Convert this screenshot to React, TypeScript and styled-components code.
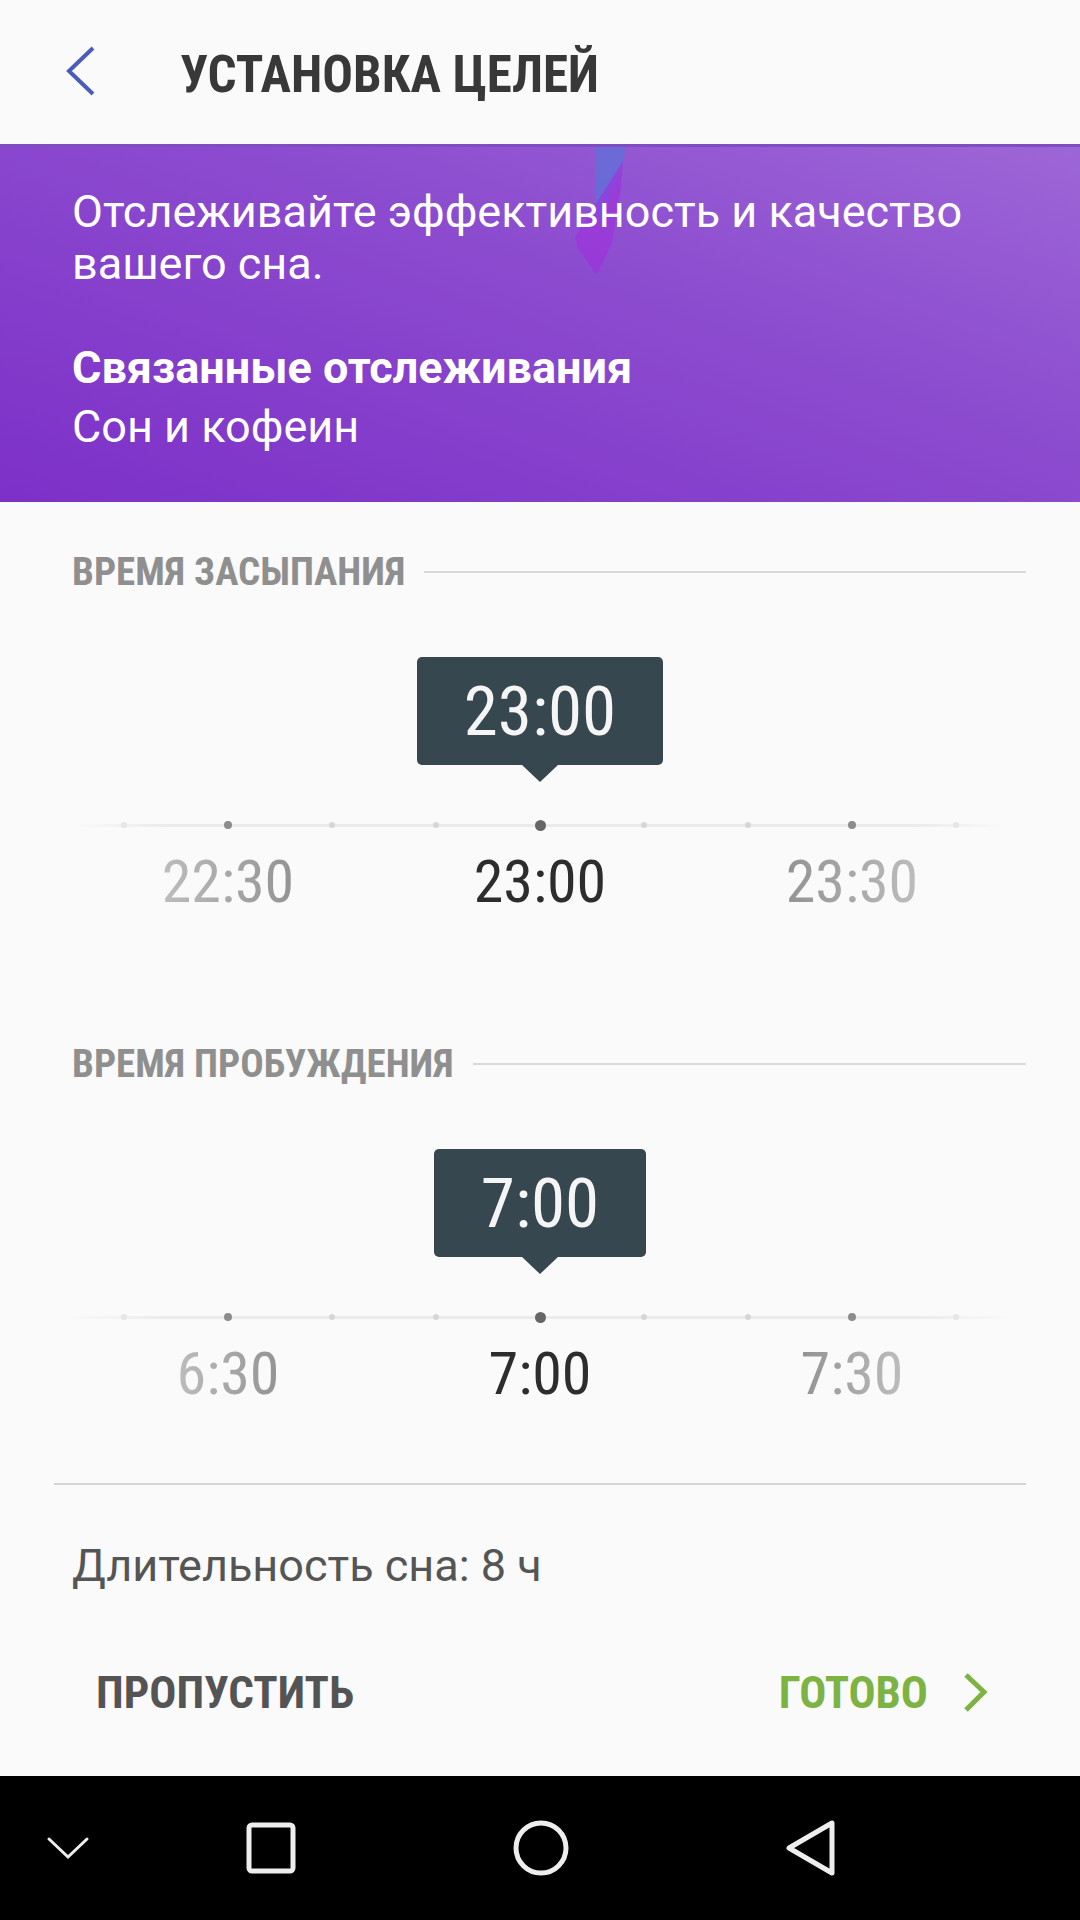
import styled, { createGlobalStyle } from 'styled-components';

const COND = `'Roboto Condensed', 'Liberation Sans Narrow', 'DejaVu Sans Condensed', Roboto, sans-serif`;

const GlobalStyle = createGlobalStyle`
  html, body {
    margin: 0;
    padding: 0;
    background: #fafafa;
  }
  body {
    font-family: Roboto, 'Noto Sans', sans-serif;
  }
`;

type TickKind = 'faint' | 'minor' | 'major' | 'center';
const ticks: TickKind[] = ['faint', 'major', 'minor', 'minor', 'center', 'minor', 'minor', 'major', 'faint'];

type PickerProps = { title: string; value: string; prev: string; next: string };

const TimePicker = ({ title, value, prev, next }: PickerProps) => (
  <Section>
    <SectionHead>
      <SectionTitle>{title}</SectionTitle>
      <Rule />
    </SectionHead>
    <Bubble>
      <BubbleBox>{value}</BubbleBox>
      <BubbleTip />
    </Bubble>
    <Ticks>
      {ticks.map((t, i) => (
        <Tick key={i} $kind={t} />
      ))}
    </Ticks>
    <Labels>
      <TimeLabel $tone='left'>{prev}</TimeLabel>
      <TimeLabel $tone='active'>{value}</TimeLabel>
      <TimeLabel $tone='right'>{next}</TimeLabel>
    </Labels>
  </Section>
);

const App = () => {
  return (
    <Screen>
      <GlobalStyle />
      <Header>
        <BackButton>
          <svg width='32' height='52' viewBox='0 0 32 52'>
            <path d='M27 2 L3 25 L27 48' fill='none' stroke='#4a5bb9' strokeWidth='4' />
          </svg>
        </BackButton>
        <Title>УСТАНОВКА ЦЕЛЕЙ</Title>
      </Header>

      <Banner>
        <Streak width='70' height='140' viewBox='0 0 70 140'>
          <path d='M25 0 L56 0 L52 20 L30 75 L26 70 Z' fill='#5d72d8' opacity='0.75' />
          <path d='M53 14 L51 40 L42 96 L27 128 L8 102 L5 90 Z' fill='#a02fdc' opacity='0.6' />
        </Streak>
        <Intro>Отслеживайте эффективность и качество вашего сна.</Intro>
        <Related>
          <strong>Связанные отслеживания</strong>
          <span>Сон и кофеин</span>
        </Related>
      </Banner>

      <Sections>
        <TimePicker title='ВРЕМЯ ЗАСЫПАНИЯ' value='23:00' prev='22:30' next='23:30' />
        <TimePicker title='ВРЕМЯ ПРОБУЖДЕНИЯ' value='7:00' prev='6:30' next='7:30' />
      </Sections>

      <Divider />
      <Duration>Длительность сна: 8 ч</Duration>

      <Actions>
        <SkipButton>ПРОПУСТИТЬ</SkipButton>
        <DoneButton>
          ГОТОВО
          <svg width='26' height='42' viewBox='0 0 26 42'>
            <path d='M4 3 L22 20 L4 38' fill='none' stroke='#7cb342' strokeWidth='5' />
          </svg>
        </DoneButton>
      </Actions>

      <Spacer />

      <NavBar>
        <NavCell>
          <svg width='44' height='26' viewBox='0 0 44 26'>
            <path d='M3 4 L22 22 L41 4' fill='none' stroke='#eee' strokeWidth='3' strokeLinecap='round' />
          </svg>
        </NavCell>
        <NavCell>
          <svg width='50' height='52' viewBox='0 0 50 52'>
            <rect x='3' y='3' width='44' height='46' rx='3' fill='none' stroke='#eee' strokeWidth='5' />
          </svg>
        </NavCell>
        <NavCell>
          <svg width='58' height='58' viewBox='0 0 58 58'>
            <circle cx='29' cy='29' r='25' fill='none' stroke='#eee' strokeWidth='5' />
          </svg>
        </NavCell>
        <NavCell>
          <svg width='52' height='58' viewBox='0 0 52 58'>
            <path d='M4 29 L47 4 L47 54 Z' fill='none' stroke='#eee' strokeWidth='5' strokeLinejoin='round' />
          </svg>
        </NavCell>
        <div />
      </NavBar>
    </Screen>
  );
};

export default App;

const Screen = styled.div`
  width: 1080px;
  height: 1920px;
  display: flex;
  flex-direction: column;
  background: #fafafa;
  overflow: hidden;
`;

const Header = styled.header`
  height: 144px;
  display: flex;
  align-items: center;
  flex-shrink: 0;
`;

const BackButton = styled.div`
  width: 180px;
  padding-left: 66px;
  box-sizing: border-box;
  display: flex;
  align-items: center;

  svg {
    display: block;
  }
`;

const Title = styled.h1`
  margin: 6px 0 0;
  font-family: ${COND};
  font-weight: 700;
  font-size: 51px;
  line-height: 60px;
  color: #383838;
  white-space: nowrap;
`;

const Banner = styled.section`
  position: relative;
  height: 358px;
  flex-shrink: 0;
  box-sizing: border-box;
  padding: 39px 72px 0;
  color: #fff;
  background: linear-gradient(200deg, #9d66d7 0%, #8c4ccf 40%, #7d30c8 100%);
  border-top: 3px solid #7f4cc2;
`;

const Streak = styled.svg`
  position: absolute;
  left: 570px;
  top: 0;
`;

const Intro = styled.p`
  position: relative;
  margin: 0;
  font-size: 45px;
  line-height: 52px;
`;

const Related = styled.div`
  position: relative;
  margin-top: 48px;
  display: flex;
  flex-direction: column;
  font-size: 45px;
  line-height: 59px;

  strong {
    font-weight: 700;
  }
`;

const Sections = styled.div`
  display: flex;
  flex-direction: column;
  gap: 125px;
  padding-top: 48px;
`;

const Section = styled.section`
  display: flex;
  flex-direction: column;
`;

const SectionHead = styled.div`
  display: flex;
  align-items: center;
  gap: 19px;
  padding: 0 54px 0 72px;
`;

const SectionTitle = styled.h2`
  margin: 0;
  font-family: ${COND};
  font-weight: 700;
  font-size: 39px;
  line-height: 44px;
  color: #8f8f8f;
  white-space: nowrap;
`;

const Rule = styled.div`
  flex: 1;
  height: 2px;
  background: #d9d9d9;
`;

const Bubble = styled.div`
  margin-top: 63px;
  display: flex;
  flex-direction: column;
  align-items: center;
`;

const BubbleBox = styled.div`
  height: 108px;
  padding: 0 47px;
  display: flex;
  align-items: center;
  border-radius: 5px;
  background: #37474f;
  color: #f5f5f5;
  font-family: ${COND};
  font-size: 69px;
`;

const BubbleTip = styled.div`
  width: 0;
  height: 0;
  border-left: 18px solid transparent;
  border-right: 18px solid transparent;
  border-top: 17px solid #37474f;
`;

const tickSizes: Record<TickKind, string> = {
  faint: '6px',
  minor: '6px',
  major: '8px',
  center: '11px',
};

const tickColors: Record<TickKind, string> = {
  faint: '#e6e6e6',
  minor: '#d6d6d6',
  major: '#8c8c8c',
  center: '#666666',
};

const Ticks = styled.div`
  margin: 33px auto 0;
  width: 936px;
  height: 20px;
  display: grid;
  grid-template-columns: repeat(9, 104px);
  align-items: center;
  justify-items: center;
  background: linear-gradient(
      to right,
      rgba(235, 235, 235, 0) 0%,
      #ebebeb 10%,
      #ebebeb 90%,
      rgba(235, 235, 235, 0) 100%
    )
    center / 100% 3px no-repeat;
`;

const Tick = styled.span<{ $kind: TickKind }>`
  width: ${({ $kind }) => tickSizes[$kind]};
  height: ${({ $kind }) => tickSizes[$kind]};
  border-radius: 50%;
  background: ${({ $kind }) => tickColors[$kind]};
`;

const Labels = styled.div`
  margin: 12px auto 0;
  width: 936px;
  display: grid;
  grid-template-columns: repeat(3, 312px);
  justify-items: center;
`;

const TimeLabel = styled.span<{ $tone: 'left' | 'active' | 'right' }>`
  font-family: ${COND};
  font-size: 60px;
  line-height: 70px;
  color: ${({ $tone }) => ($tone === 'active' ? '#2d2d2d' : 'transparent')};
  ${({ $tone }) =>
    $tone === 'active'
      ? ''
      : `
    background: linear-gradient(to ${$tone === 'left' ? 'right' : 'left'}, #bdbdbd, #939393);
    -webkit-background-clip: text;
    background-clip: text;
  `}
`;

const Divider = styled.div`
  margin: 74px 54px 0;
  height: 2px;
  background: #d6d6d6;
  flex-shrink: 0;
`;

const Duration = styled.p`
  margin: 55px 0 0;
  padding: 0 72px;
  font-size: 45px;
  line-height: 52px;
  color: #555;
`;

const Actions = styled.div`
  margin-top: 75px;
  padding: 0 92px 0 96px;
  display: flex;
  justify-content: space-between;
  align-items: center;
`;

const SkipButton = styled.button`
  border: none;
  background: none;
  padding: 0;
  font-family: ${COND};
  font-weight: 700;
  font-size: 45px;
  line-height: 52px;
  color: #545454;
`;

const DoneButton = styled(SkipButton)`
  display: flex;
  align-items: center;
  gap: 34px;
  color: #7cb342;

  svg {
    display: block;
  }
`;

const Spacer = styled.div`
  flex: 1;
`;

const NavBar = styled.nav`
  height: 144px;
  flex-shrink: 0;
  background: #000;
  display: grid;
  grid-template-columns: 136px 270px 270px 270px 134px;
  align-items: center;
`;

const NavCell = styled.div`
  display: flex;
  justify-content: center;
  align-items: center;

  svg {
    display: block;
  }
`;
